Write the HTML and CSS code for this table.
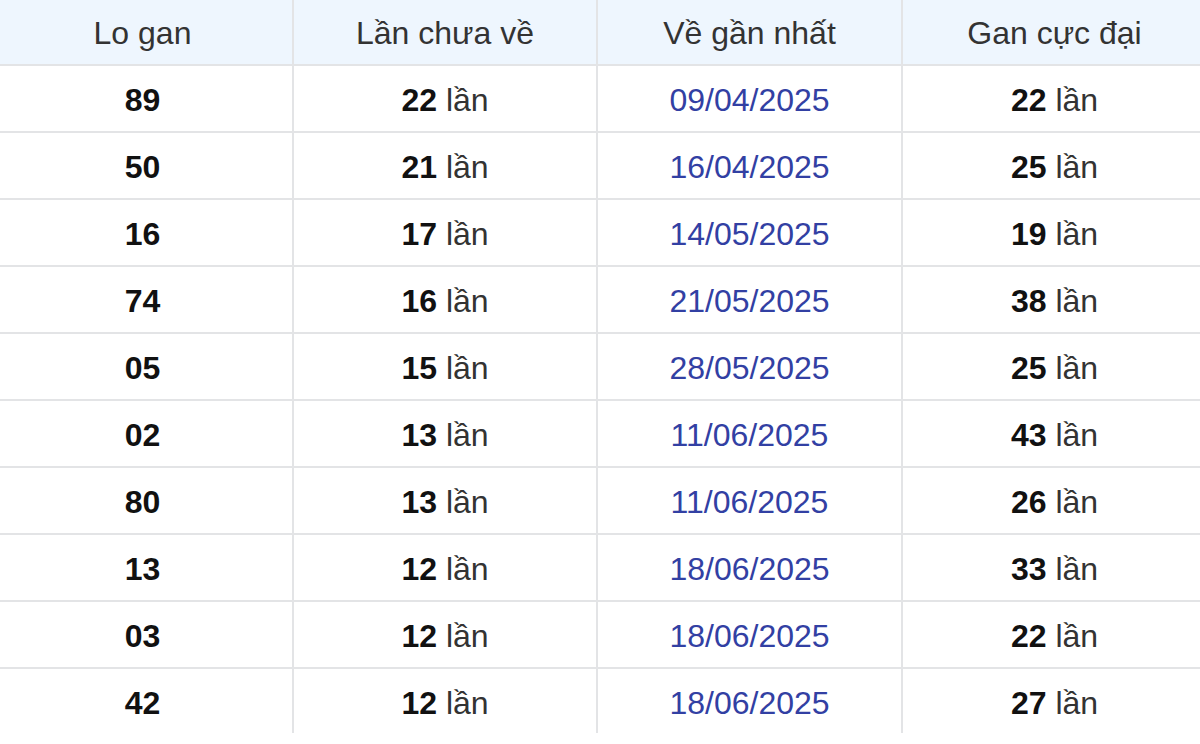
FILE: index.html
```html
<!DOCTYPE html>
<html lang="vi">
<head>
<meta charset="utf-8">
<title>Lo gan</title>
<link rel="stylesheet" href="styles.css">
</head>
<body>
<div class="table">
  <div class="row head">
    <div class="cell">Lo gan</div>
    <div class="cell">Lần chưa về</div>
    <div class="cell">Về gần nhất</div>
    <div class="cell">Gan cực đại</div>
  </div>
  <div class="row"><div class="cell"><b>89</b></div><div class="cell"><b>22</b>&nbsp;lần</div><div class="cell date">09/04/2025</div><div class="cell"><b>22</b>&nbsp;lần</div></div>
  <div class="row"><div class="cell"><b>50</b></div><div class="cell"><b>21</b>&nbsp;lần</div><div class="cell date">16/04/2025</div><div class="cell"><b>25</b>&nbsp;lần</div></div>
  <div class="row"><div class="cell"><b>16</b></div><div class="cell"><b>17</b>&nbsp;lần</div><div class="cell date">14/05/2025</div><div class="cell"><b>19</b>&nbsp;lần</div></div>
  <div class="row"><div class="cell"><b>74</b></div><div class="cell"><b>16</b>&nbsp;lần</div><div class="cell date">21/05/2025</div><div class="cell"><b>38</b>&nbsp;lần</div></div>
  <div class="row"><div class="cell"><b>05</b></div><div class="cell"><b>15</b>&nbsp;lần</div><div class="cell date">28/05/2025</div><div class="cell"><b>25</b>&nbsp;lần</div></div>
  <div class="row"><div class="cell"><b>02</b></div><div class="cell"><b>13</b>&nbsp;lần</div><div class="cell date">11/06/2025</div><div class="cell"><b>43</b>&nbsp;lần</div></div>
  <div class="row"><div class="cell"><b>80</b></div><div class="cell"><b>13</b>&nbsp;lần</div><div class="cell date">11/06/2025</div><div class="cell"><b>26</b>&nbsp;lần</div></div>
  <div class="row"><div class="cell"><b>13</b></div><div class="cell"><b>12</b>&nbsp;lần</div><div class="cell date">18/06/2025</div><div class="cell"><b>33</b>&nbsp;lần</div></div>
  <div class="row"><div class="cell"><b>03</b></div><div class="cell"><b>12</b>&nbsp;lần</div><div class="cell date">18/06/2025</div><div class="cell"><b>22</b>&nbsp;lần</div></div>
  <div class="row last"><div class="cell"><b>42</b></div><div class="cell"><b>12</b>&nbsp;lần</div><div class="cell date">18/06/2025</div><div class="cell"><b>27</b>&nbsp;lần</div></div>
</div>
</body>
</html>
```

FILE: styles.css
```css
html, body {
  margin: 0;
  padding: 0;
  background: #ffffff;
  overflow: hidden;
}

.table {
  margin-left: -11px;
  width: 1219px;
  font-family: "Liberation Sans", Arial, sans-serif;
  font-size: 32px;
  color: #333333;
}

.row {
  display: grid;
  grid-template-columns: 305px 304px 305px 305px;
  height: 67px;
}

.row.head {
  height: 66px;
  background: #eef6fe;
}

.row.last {
  height: 64px;
}

.cell {
  box-sizing: border-box;
  display: flex;
  align-items: center;
  justify-content: center;
  padding-top: 3px;
  border-right: 2px solid #e3e4e6;
  border-bottom: 2px solid #e3e4e6;
  white-space: nowrap;
}

.row .cell:first-child {
  padding-left: 4px;
}

.row.last .cell {
  border-bottom: none;
  padding-bottom: 0;
  padding-top: 5px;
}

.cell b {
  font-weight: 700;
  color: #111111;
}

.date {
  color: #3240a3;
}
```
